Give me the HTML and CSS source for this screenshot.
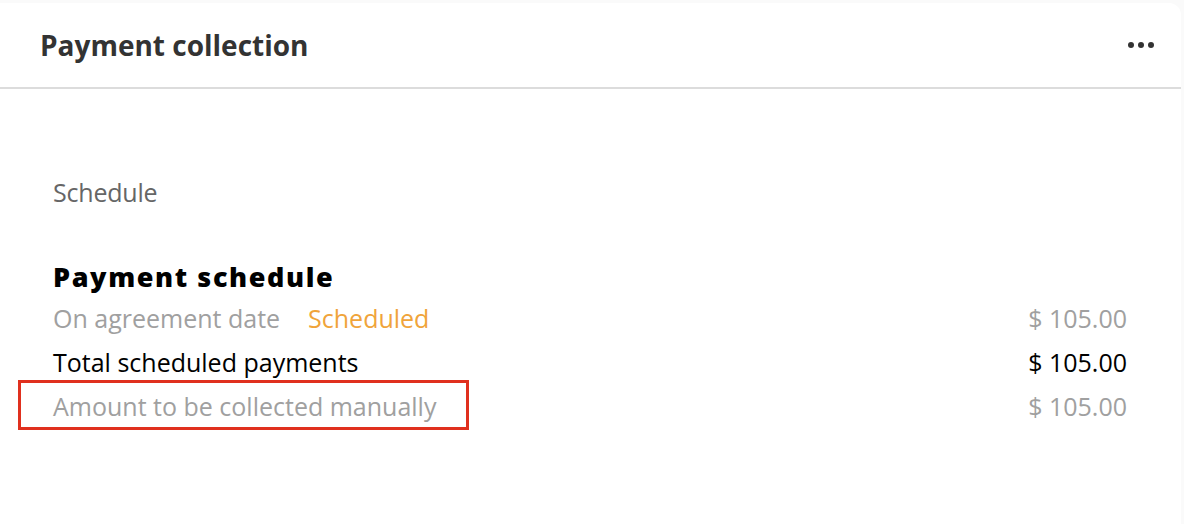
FILE: index.html
```html
<!DOCTYPE html>
<html>
<head>
<meta charset="utf-8">
<link rel="stylesheet" href="styles.css">
</head>
<body>
<div class="card">
  <div class="card-header">
    <h2 class="title">Payment collection</h2>
    <button class="more" aria-label="More"><span></span><span></span><span></span></button>
  </div>
  <div class="card-body">
    <div class="section-label">Schedule</div>
    <h3 class="sched-title">Payment schedule</h3>
    <div class="rows">
      <div class="row muted">
        <div class="row-left"><span>On agreement date</span><span class="status">Scheduled</span></div>
        <div class="amount">$ 105.00</div>
      </div>
      <div class="row strong">
        <div class="row-left"><span>Total scheduled payments</span></div>
        <div class="amount">$ 105.00</div>
      </div>
      <div class="row muted">
        <div class="row-left"><span class="highlight">Amount to be collected manually</span></div>
        <div class="amount">$ 105.00</div>
      </div>
    </div>
  </div>
</div>
</body>
</html>
```
FILE: styles.css
```css
html, body {
  margin: 0;
  padding: 0;
  background: #fafafa;
  font-family: "Open Sans", "Lato", sans-serif;
}
body {
  padding: 3px 3px 0 0;
  height: 524px;
  box-sizing: border-box;
  overflow: hidden;
}
.card {
  background: #fff;
  border-radius: 0 12px 0 0;
  height: 100%;
}
.card-header {
  height: 84px;
  display: flex;
  align-items: center;
  justify-content: space-between;
  padding: 0 27px 0 40px;
  border-bottom: 2px solid #dcdcdc;
}
.title {
  margin: 0;
  font-size: 28px;
  font-weight: 700;
  color: #333;
  letter-spacing: 0;
}
.more {
  border: 0;
  background: none;
  padding: 0;
  display: flex;
  gap: 4px;
  cursor: pointer;
}
.more span {
  width: 6px;
  height: 6px;
  border-radius: 50%;
  background: #333;
}
.card-body {
  padding: 88px 54px 0 53px;
}
.section-label {
  font-size: 25px;
  color: #666;
  line-height: 30px;
  letter-spacing: -0.2px;
}
.sched-title {
  margin: 54px 0 0 0;
  font-size: 27px;
  font-weight: 800;
  color: #000;
  line-height: 32px;
  letter-spacing: 1.6px;
}
.rows {
  margin-top: 3px;
}
.row {
  display: flex;
  justify-content: space-between;
  align-items: center;
  font-size: 25px;
  line-height: 34px;
  height: 44px;
}
.row.muted { color: #a0a0a0; }
.row.strong { color: #000; }
.row-left {
  display: flex;
  gap: 28px;
}
.status { color: #f0a43a; }
.highlight {
  position: relative;
}
.highlight::after {
  content: "";
  position: absolute;
  left: -35px;
  right: -33px;
  top: -9px;
  bottom: -7px;
  border: 3px solid #e0301e;
}
```
